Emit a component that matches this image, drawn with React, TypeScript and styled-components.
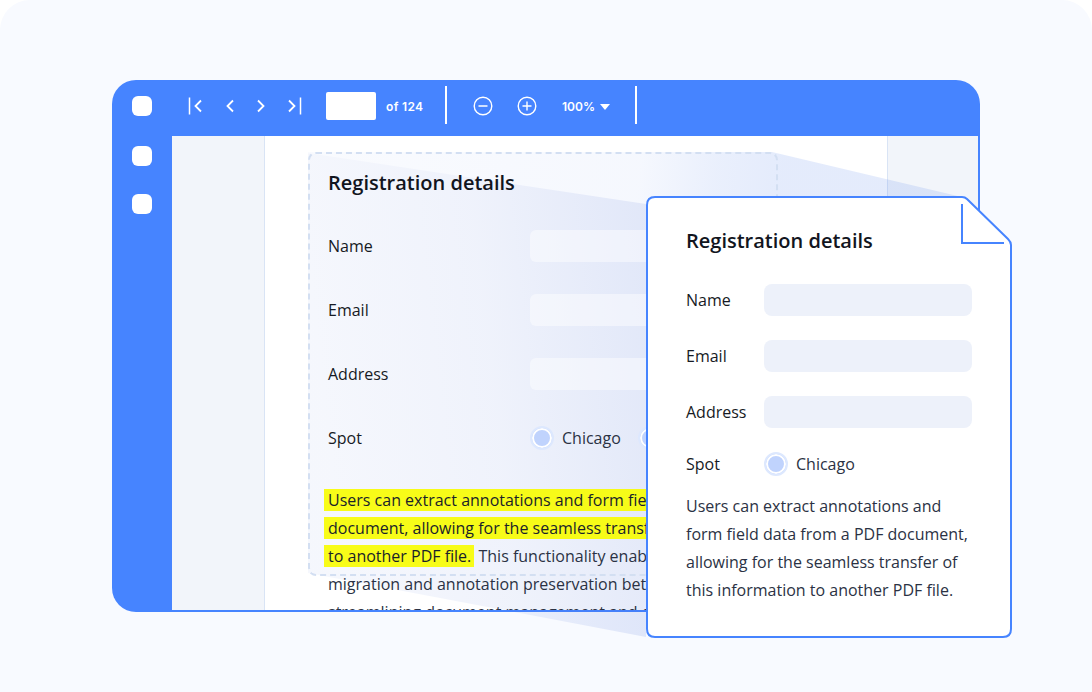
import React from "react";
import styled, { createGlobalStyle } from "styled-components";

const Global = createGlobalStyle`
  html, body { margin: 0; padding: 0; background: #fff; }
  body { font-family: "Open Sans", "Noto Sans", "Liberation Sans", sans-serif; overflow: hidden; }
`;

const Stage = styled.div`
  position: relative;
  width: 1092px;
  height: 692px;
  box-sizing: border-box;
  padding: 80px 112px 0;
  background: #f8faff;
  border-radius: 30px 30px 0 0;
  overflow: hidden;
`;

const Window = styled.div`
  width: 868px;
  height: 532px;
  display: grid;
  grid-template-columns: 60px 1fr;
  grid-template-rows: 56px 1fr;
  background: #4684ff;
  border-radius: 24px 24px 0 24px;
  overflow: hidden;
`;

const TopBar = styled.div`
  grid-column: 1 / 3;
  display: flex;
  align-items: center;
  color: #fff;
  padding-bottom: 4px;
`;

const Dot = styled.span`
  display: block;
  width: 20px;
  height: 20px;
  border-radius: 6px;
  background: #fff;
  flex: none;
`;

const TopDotSlot = styled.div`
  width: 60px;
  display: flex;
  justify-content: center;
  flex: none;
`;

const NavIcons = styled.div`
  display: flex;
  align-items: center;
  margin-left: 16px;
`;

const NavIcon = styled.svg<{ $gap: number }>`
  display: block;
  width: 14px;
  height: 18px;
  margin-left: ${(p) => p.$gap}px;
  fill: none;
  stroke: #fff;
  stroke-width: 1.8;
  flex: none;
`;

const PageBox = styled.div`
  width: 50px;
  height: 28px;
  border-radius: 2px;
  background: #fff;
  margin-left: 24px;
`;

const OfText = styled.span`
  font-family: Inter, Roboto, sans-serif;
  font-size: 12px;
  font-weight: 600;
  letter-spacing: 0.35px;
  margin-left: 10px;
  width: 59px;
  flex: none;
`;

const Divider = styled.span`
  display: block;
  width: 2px;
  height: 38px;
  margin-top: -2px;
  background: #fff;
  flex: none;
`;

const ZoomIcon = styled.svg`
  display: block;
  width: 20px;
  height: 20px;
  fill: none;
  stroke: #fff;
  stroke-width: 1.4;
  flex: none;
`;

const ZoomIcons = styled.div`
  display: flex;
  align-items: center;
  gap: 24px;
  margin-left: 26px;
`;

const ZoomLevel = styled.span`
  font-family: Inter, Roboto, sans-serif;
  font-size: 12px;
  font-weight: 600;
  margin-left: 25px;
  width: 73px;
  flex: none;
  display: flex;
  align-items: center;
  gap: 5px;
`;

const Caret = styled.span`
  width: 0;
  height: 0;
  border-left: 5.5px solid transparent;
  border-right: 5.5px solid transparent;
  border-top: 6px solid #fff;
  margin-top: 2px;
`;

const Side = styled.div`
  display: flex;
  flex-direction: column;
  align-items: center;
  gap: 28px;
  padding-top: 10px;
`;

const Body = styled.div`
  display: grid;
  grid-template-columns: 93px 1fr 91px;
  background: #fff;
  border-right: 2px solid #4684ff;
  border-bottom: 2px solid #4684ff;
  overflow: hidden;
  min-height: 0;
`;

const GrayPane = styled.div<{ $side: "left" | "right" }>`
  background: #f2f5fa;
  border-${(p) => (p.$side === "left" ? "right" : "left")}: 1px solid #d9e4f5;
`;

const Sheet = styled.div`
  padding: 28px 0 0 63px;
  overflow: hidden;
  min-height: 0;
`;

const Title = styled.h2`
  position: relative;
  z-index: 1;
  margin: 0;
  font-size: 20px;
  line-height: 38px;
  font-weight: 600;
  color: #12151e;
`;

const SheetRows = styled.div`
  position: relative;
  display: grid;
  grid-template-columns: 202px 1fr;
  grid-auto-rows: 32px;
  row-gap: 32px;
  margin-top: 28px;
  align-items: center;
`;

const Label = styled.span`
  position: relative;
  z-index: 1;
  font-size: 16px;
  color: #161a24;
`;

const SheetInput = styled.div`
  position: relative;
  z-index: 1;
  height: 32px;
  width: 300px;
  background: rgba(255, 255, 255, 0.45);
  border-radius: 6px;
`;

const RadioRow = styled.div`
  position: relative;
  z-index: 1;
  display: flex;
  align-items: center;
  gap: 8px;
  font-size: 16px;
  color: #2b3244;
`;

const Radio = styled.span`
  box-sizing: border-box;
  width: 24px;
  height: 24px;
  border-radius: 50%;
  background: #c0d3fd;
  border: 2px solid #dde8fe;
  box-shadow: inset 0 0 0 2px #fff;
  flex: none;
`;

const SecondRadio = styled(Radio)`
  margin-left: 9px;
`;

const Paragraph = styled.p`
  position: relative;
  z-index: 1;
  margin: 32px 0 0;
  white-space: nowrap;
  font-size: 16px;
  line-height: 28px;
  color: #2b3244;
`;

const Mark = styled.mark`
  background: rgba(248, 252, 6, 0.93);
  color: #1a1f2a;
  padding: 0 3px 0 4px;
  margin-left: -4px;
  box-decoration-break: clone;
  -webkit-box-decoration-break: clone;
`;

const Beam = styled.svg`
  position: absolute;
  left: 0;
  top: 0;
  width: 1092px;
  height: 692px;
  pointer-events: none;
`;

const DashedFrame = styled.div`
  position: absolute;
  left: 308px;
  top: 152px;
  width: 470px;
  height: 424px;
  box-sizing: border-box;
  border: 2px dashed #d3dff2;
  border-radius: 8px;
`;

const Card = styled.div`
  position: absolute;
  z-index: 2;
  left: 646px;
  top: 196px;
  width: 366px;
  height: 442px;
  box-sizing: border-box;
  padding: 26px 40px 0;
`;

const CardShape = styled.svg`
  position: absolute;
  left: 0;
  top: 0;
  width: 366px;
  height: 442px;
`;

const CardContent = styled.div`
  position: relative;
`;

const CardTitle = styled.h2`
  margin: 0;
  font-size: 20px;
  line-height: 38px;
  font-weight: 600;
  color: #12151e;
`;

const CardRows = styled.div`
  display: grid;
  grid-template-columns: 78px 208px;
  grid-auto-rows: 32px;
  row-gap: 24px;
  margin-top: 24px;
  align-items: center;
`;

const CardInput = styled.div`
  height: 32px;
  background: #edf1fa;
  border-radius: 8px;
`;

const SpotRow = styled.div`
  display: grid;
  grid-template-columns: 78px 1fr;
  align-items: center;
  height: 32px;
  margin-top: 20px;
`;

const CardParagraph = styled.p`
  margin: 12px 0 0;
  white-space: nowrap;
  font-size: 16px;
  line-height: 28px;
  color: #2b3244;
`;

const App = () => (
  <Stage>
    <Global />
    <Window>
      <TopBar>
        <TopDotSlot>
          <Dot />
        </TopDotSlot>
        <NavIcons>
          <NavIcon $gap={0} viewBox="0 0 14 18">
            <path d="M1.500 0.500v17" strokeWidth="1.500" />
            <path d="M13 3.500 7.500 9 13 14.500" />
          </NavIcon>
          <NavIcon $gap={21} viewBox="0 0 14 18">
            <path d="M10 3.500 4.500 9l5.500 5.500" />
          </NavIcon>
          <NavIcon $gap={17} viewBox="0 0 14 18">
            <path d="M4 3.500 9.500 9 4 14.500" />
          </NavIcon>
          <NavIcon $gap={20} viewBox="0 0 14 18">
            <path d="M12.500 0.500v17" strokeWidth="1.500" />
            <path d="M1 3.500 6.500 9 1 14.500" />
          </NavIcon>
        </NavIcons>
        <PageBox />
        <OfText>of 124</OfText>
        <Divider />
        <ZoomIcons>
          <ZoomIcon viewBox="0 0 20 20">
            <circle cx="10" cy="10" r="8.800" />
            <path d="M5.500 10h9" />
          </ZoomIcon>
          <ZoomIcon viewBox="0 0 20 20">
            <circle cx="10" cy="10" r="8.800" />
            <path d="M5.500 10h9M10 5.500v9" />
          </ZoomIcon>
        </ZoomIcons>
        <ZoomLevel>
          100%
          <Caret />
        </ZoomLevel>
        <Divider />
      </TopBar>
      <Side>
        <Dot />
        <Dot />
      </Side>
      <Body>
        <GrayPane $side="left" />
        <Sheet>
          <Title>Registration details</Title>
          <SheetRows>
            <Label>Name</Label>
            <SheetInput />
            <Label>Email</Label>
            <SheetInput />
            <Label>Address</Label>
            <SheetInput />
            <Label>Spot</Label>
            <RadioRow>
              <Radio />
              Chicago
              <SecondRadio />
            </RadioRow>
          </SheetRows>
          <Paragraph>
            <Mark>
              Users can extract annotations and form field data
              <br />
              document, allowing for the seamless transfer of this
              <br />
              to another PDF file.
            </Mark>{" "}
            This functionality enables efficient
            <br />
            migration and annotation preservation between
            <br />
            streamlining document management and data
          </Paragraph>
        </Sheet>
        <GrayPane $side="right" />
      </Body>
    </Window>
    <Beam viewBox="0 0 1092 692">
      <defs>
        <linearGradient id="beamFill" gradientUnits="userSpaceOnUse" x1="308" y1="300" x2="650" y2="260">
          <stop offset="0" stopColor="#3a62d4" stopOpacity="0.05" />
          <stop offset="0.5" stopColor="#3a62d4" stopOpacity="0.08" />
          <stop offset="1" stopColor="#3a62d4" stopOpacity="0.15" />
        </linearGradient>
        <linearGradient id="wedgeFill" gradientUnits="userSpaceOnUse" x1="308" y1="152" x2="780" y2="200">
          <stop offset="0" stopColor="#3f72e8" stopOpacity="0.03" />
          <stop offset="0.7" stopColor="#3f72e8" stopOpacity="0.05" />
          <stop offset="0.86" stopColor="#3f72e8" stopOpacity="0.11" />
          <stop offset="1" stopColor="#3f72e8" stopOpacity="0.14" />
        </linearGradient>
      </defs>
      <path d="M308 153 646 204V637L308 573Z" fill="url(#beamFill)" />
      <path d="M308 152H772L966 198 646 204 308 153Z" fill="url(#wedgeFill)" />
    </Beam>
    <DashedFrame />
    <Card>
      <CardShape viewBox="0 0 366 442">
        <path
          d="M9 1H316Q319 1 321 3L362 43Q365 46 365 49V433Q365 441 357 441H9Q1 441 1 433V9Q1 1 9 1Z"
          fill="#fff"
          stroke="#4684ff"
          strokeWidth="2"
        />
        <path d="M316 8V47H358" fill="none" stroke="#4684ff" strokeWidth="2" />
      </CardShape>
      <CardContent>
        <CardTitle>Registration details</CardTitle>
        <CardRows>
          <Label>Name</Label>
          <CardInput />
          <Label>Email</Label>
          <CardInput />
          <Label>Address</Label>
          <CardInput />
        </CardRows>
        <SpotRow>
          <Label>Spot</Label>
          <RadioRow>
            <Radio />
            Chicago
          </RadioRow>
        </SpotRow>
        <CardParagraph>
          Users can extract annotations and
          <br />
          form field data from a PDF document,
          <br />
          allowing for the seamless transfer of
          <br />
          this information to another PDF file.
        </CardParagraph>
      </CardContent>
    </Card>
  </Stage>
);

export default App;
